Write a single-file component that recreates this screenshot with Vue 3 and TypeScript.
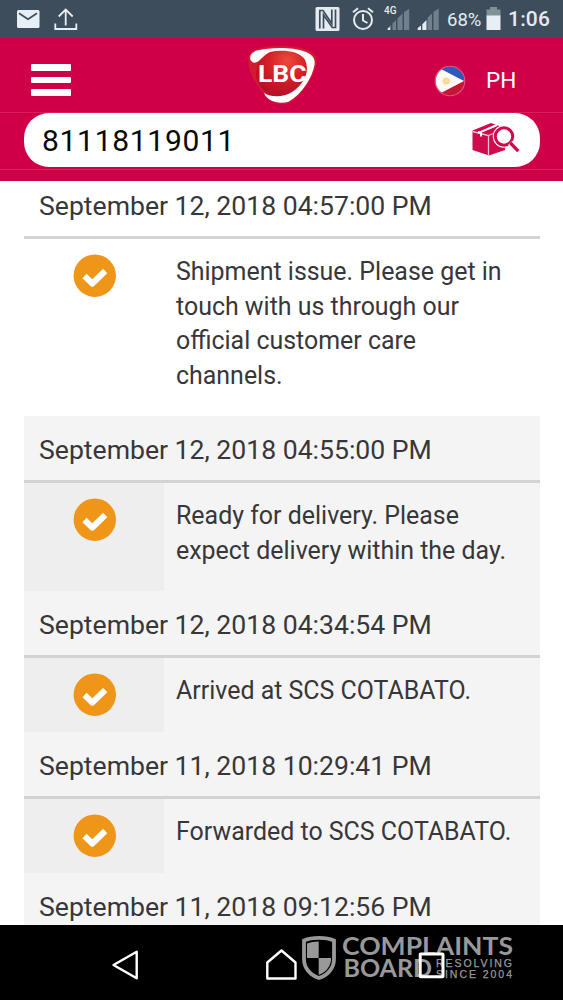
<script setup lang="ts">
interface TrackingEvent {
  date: string
  lines: string[]
}

const events: TrackingEvent[] = [
  {
    date: 'September 12, 2018 04:57:00 PM',
    lines: ['Shipment issue. Please get in', 'touch with us through our', 'official customer care', 'channels.'],
  },
  {
    date: 'September 12, 2018 04:55:00 PM',
    lines: ['Ready for delivery. Please', 'expect delivery within the day.'],
  },
  { date: 'September 12, 2018 04:34:54 PM', lines: ['Arrived at SCS COTABATO.'] },
  { date: 'September 11, 2018 10:29:41 PM', lines: ['Forwarded to SCS COTABATO.'] },
  { date: 'September 11, 2018 09:12:56 PM', lines: [] },
]
</script>

<template>
  <div class="screen">
    <header class="status">
      <svg class="status-left" width="80" height="38" viewBox="0 0 80 38">
        <rect x="17" y="10" width="22.5" height="18" rx="1.5" fill="#e6eef6" />
        <path d="M19 13.2 L28 19.2 L37 13.2" fill="none" stroke="#3e4d5b" stroke-width="1.7" />
        <path d="M65.7 25.5V10M58.7 16.5L65.7 9.5L72.7 16.5M55.3 23.5V29H76.3V23.5" fill="none" stroke="#e6eef6" stroke-width="1.8" />
      </svg>
      <div class="status-right">
        <svg width="130" height="38" viewBox="310 0 130 38">
          <rect x="315.5" y="7" width="24" height="24" rx="1.5" fill="#e4ecf1" />
          <path d="M319.8 28.5V10.5H323L331.8 23.5V9.5M335.5 9.5V27.5H332.3L323.5 15V28.5" fill="none" stroke="#3e4d5b" stroke-width="1.7" />
          <g fill="none" stroke="#e4ecf1" stroke-width="2">
            <circle cx="363" cy="20" r="9" />
            <path d="M363 14V20.5L367.5 23M353 12.2L358 8.2M373 12.2L368 8.2" />
          </g>
          <g fill="#71808c">
            <path d="M387.7 30V28.2L391 25V30zM392.5 30V23.5L396 20V30zM397.5 30V18.6L402.5 13.6V30zM404 30V12.2L409.2 8.7V30z" />
            <path d="M427.5 30V17.8L432 13.4V30zM433.5 30V12L438.7 8.5V30z" />
          </g>
          <path d="M387.7 30V28.5L390 27V30zM417.7 30V28L421 25.6V30zM422.3 30V24.2L426.5 20V30z" fill="#e4ecf1" />
        </svg>
        <span class="network">4G</span>
        <span class="percent">68%</span>
        <svg class="battery" width="15" height="24" viewBox="0 0 15 24">
          <path d="M4 0H11V2.5H14.5V9H.5V2.5H4z" fill="#82909a" />
          <path d="M.5 8.5H14.5V23H.5z" fill="#e7eff4" />
        </svg>
        <span class="clock">1:06</span>
      </div>
    </header>

    <div class="brand">
      <div class="topbar">
        <div class="menu"><i></i><i></i><i></i></div>
        <svg class="logo" width="74" height="66" viewBox="0 0 74 66">
          <defs>
            <radialGradient id="shield" cx="60%" cy="25%" r="70%">
              <stop offset="0" stop-color="#ee4a3c" />
              <stop offset=".5" stop-color="#d52027" />
              <stop offset="1" stop-color="#b90f28" />
            </radialGradient>
          </defs>
          <path d="M4 14C7 6 21 4 37 4C54 4 70 8 71.5 17C73.5 27 58 54 44 61C38 64 28 62 21 54C12 45 0 25 4 14z" fill="#cf1c31" />
          <ellipse cx="37" cy="31" rx="26" ry="25" fill="url(#shield)" />
          <path d="M8 20.5C3.5 18 4 11 12 8.5C25 5 48 5 58 9C68 12 70.5 17 69.5 23C67 36 57 52 44 59.5C34 63 22 59 19 51C26 55.5 38 55.5 47 50C60 42 65.5 28 59.5 17C53 8 36 7.5 25 10C18 13 14 22 8 20.5z" fill="#fff" />
          <text x="13" y="40" textLength="48.5" lengthAdjust="spacingAndGlyphs">LBC</text>
        </svg>
        <div class="region">
          <svg width="32" height="32" viewBox="0 0 32 32">
            <defs><clipPath id="round"><circle cx="16" cy="16" r="14.5" /></clipPath></defs>
            <g clip-path="url(#round)">
              <path d="M0 0H32V16H0z" fill="#3159bd" />
              <path d="M0 16H32V32H0z" fill="#c51634" />
              <path d="M0 -1L6 3.5L30 16L6 28.5L0 33z" fill="#fffaf5" />
            </g>
            <circle cx="16" cy="16" r="14.8" fill="none" stroke="#e2557f" stroke-width="1.1" />
            <circle cx="12.3" cy="16" r="3.3" fill="#f8d183" />
            <path d="M12.3 11.5V20.5M7.8 16H16.8M9 12.6L15.6 19.4M15.6 12.6L9 19.4" stroke="#fae0ae" stroke-width="1" />
          </svg>
          <span>PH</span>
        </div>
      </div>
      <div class="search">
        <span>81118119011</span>
        <svg width="50" height="36" viewBox="0 0 50 36">
          <path d="M1.5 8.5L20 1L34 6V28L18 33.5L1.5 28z" fill="#d00b4d" />
          <path d="M1.5 9.5L17.5 13.5V33.5M17.5 13.5L33 7" fill="none" stroke="#f7bfd0" stroke-width="1.3" />
          <path d="M26 3L10 9.8V14.5M10 10.5L7 10" fill="none" stroke="#fff" stroke-width="2" />
          <circle cx="33" cy="14.5" r="11.2" fill="#fff" />
          <circle cx="33" cy="14.5" r="8.7" fill="#fff" stroke="#d00b4d" stroke-width="3" />
          <path d="M39.3 20.8L47 28.7" stroke="#fff" stroke-width="6" />
          <path d="M39.3 20.8L47.3 29.2" stroke="#d00b4d" stroke-width="3.4" />
        </svg>
      </div>
      <div class="seam"></div>
    </div>

    <main class="history">
      <section v-for="(event, index) in events" :key="event.date" class="event" :class="{ latest: index === 0 }">
        <h2><span>{{ event.date }}</span></h2>
        <div v-if="event.lines.length" class="detail">
          <div class="mark">
            <svg width="44" height="44" viewBox="0 0 44 44">
              <circle cx="21.8" cy="21.7" r="21.2" fill="#ef9518" />
              <path d="M11.5 22L19.3 29.5L32.2 17" fill="none" stroke="#fff" stroke-width="6" stroke-linejoin="round" />
            </svg>
          </div>
          <p><span v-for="line in event.lines" :key="line">{{ line }}</span></p>
        </div>
      </section>
    </main>

    <nav class="navbar">
      <svg width="563" height="75" viewBox="0 0 563 75">
        <g fill="none" stroke="#fff" stroke-width="2.4" stroke-linejoin="round">
          <path d="M113.5 40L136.7 26.7V53.2z" />
          <path d="M267.3 53.5V37.5L281.5 25.5L295.5 37.5V53.5z" />
        </g>
        <path d="M304 15.5C312 12 326 12 334 15.5V34C334 43 328 50 319 53C310 50 304 43 304 34z" fill="none" stroke="#999" stroke-width="3.8" />
        <path d="M307 18.5Q312 16.6 318.7 16.6V33H307zM318.7 33H331V36Q329 46 318.7 50z" fill="#999" />
        <g class="watermark">
          <text x="342" y="29.7" class="large" textLength="171" lengthAdjust="spacingAndGlyphs">COMPLAINTS</text>
          <text x="343.5" y="52" class="large" textLength="88.5" lengthAdjust="spacingAndGlyphs">BOARD</text>
          <text x="436" y="42" class="small" textLength="76">RESOLVING</text>
          <text x="436" y="52.5" class="small" textLength="76">SINCE 2004</text>
        </g>
        <rect x="420.2" y="29" width="22.8" height="22.8" fill="none" stroke="#fff" stroke-width="3" rx=".5" />
      </svg>
    </nav>
  </div>
</template>

<style>
body {
  margin: 0;
  overflow: hidden;
}
</style>

<style scoped>
.screen {
  width: 563px;
  height: 1000px;
  display: flex;
  flex-direction: column;
  overflow: hidden;
  background: #fff;
  color: #373739;
  font-family: Roboto, "Liberation Sans", sans-serif;
}
.status {
  height: 38px;
  flex: none;
  display: flex;
  justify-content: space-between;
  background: #3e4d5b;
  color: #e4ecf1;
}
.status-right {
  position: relative;
  display: flex;
  align-items: center;
  width: 253px;
  white-space: nowrap;
}
.status-right > svg {
  flex: none;
}
.network {
  position: absolute;
  left: 74px;
  top: 5px;
  font-size: 10px;
  line-height: 12px;
  font-weight: 500;
}
.percent {
  width: 38px;
  margin-left: 7px;
  font-size: 18.5px;
  flex: none;
  padding-top: 1px;
}
.battery {
  margin-left: 1px;
}
.clock {
  margin-left: 7px;
  font-size: 21px;
  font-weight: 500;
  letter-spacing: 0.2px;
}
.brand {
  height: 143px;
  flex: none;
  background: #d00048;
}
.topbar {
  height: 75px;
  box-sizing: border-box;
  display: flex;
  border-bottom: 1px solid #d81f5a;
}
.menu {
  width: 40px;
  margin: 26px 0 0 31px;
  display: flex;
  flex-direction: column;
  gap: 6px;
}
.menu i {
  height: 6.5px;
  border-radius: 1px;
  background: #fff;
}
.logo {
  margin: 4px 0 0 174px;
}
.logo text {
  font: bold 23.5px Roboto, sans-serif;
  fill: #fff;
}
.region {
  height: 32px;
  margin: 27px 0 0 115px;
  display: flex;
  align-items: center;
  gap: 20px;
  color: #fff;
  font-size: 22.5px;
}
.region span {
  line-height: 30px;
  padding-bottom: 3px;
}
.search {
  width: 516px;
  height: 54px;
  margin: 0 0 0 24px;
  box-sizing: border-box;
  padding: 0 19px 0 18px;
  display: flex;
  align-items: center;
  justify-content: space-between;
  border-radius: 25px;
  background: #fff;
  color: #080808;
  font-size: 30px;
  letter-spacing: 0.7px;
}
.seam {
  height: 1px;
  margin-top: 2px;
  background: #d81f5a;
}
.history {
  flex: 1;
  min-height: 0;
  overflow: hidden;
  padding: 0 23px 0 24px;
}
.event {
  background: #f4f4f4;
}
.event h2 {
  height: 67px;
  margin: 0;
  padding: 19px 0 0 15px;
  box-sizing: border-box;
  border-bottom: 3px solid #d3d3d3;
  font-size: 26.6px;
  font-weight: 400;
  line-height: 30px;
  white-space: nowrap;
}
.detail {
  display: flex;
}
.mark {
  width: 140px;
  flex: none;
  box-sizing: border-box;
  padding: 15px 0 0 49px;
  background: #eeeeee;
}
.mark svg {
  display: block;
}
.detail p {
  margin: 0;
  padding: 16px 0 23.2px 12px;
  font-size: 24.95px;
  line-height: 34.5px;
  white-space: nowrap;
}
.detail p span {
  display: block;
}
.latest,
.latest .mark {
  background: #fff;
}
.latest h2 {
  height: 58px;
  padding-top: 10px;
}
.navbar {
  height: 75px;
  flex: none;
  background: #000;
}
.navbar svg {
  display: block;
}
.watermark {
  fill: #999;
}
.large {
  font: bold 24px Lato, sans-serif;
}
.small {
  font: 10.5px "Liberation Sans", sans-serif;
  stroke: #999;
  stroke-width: 0.25;
}
</style>
